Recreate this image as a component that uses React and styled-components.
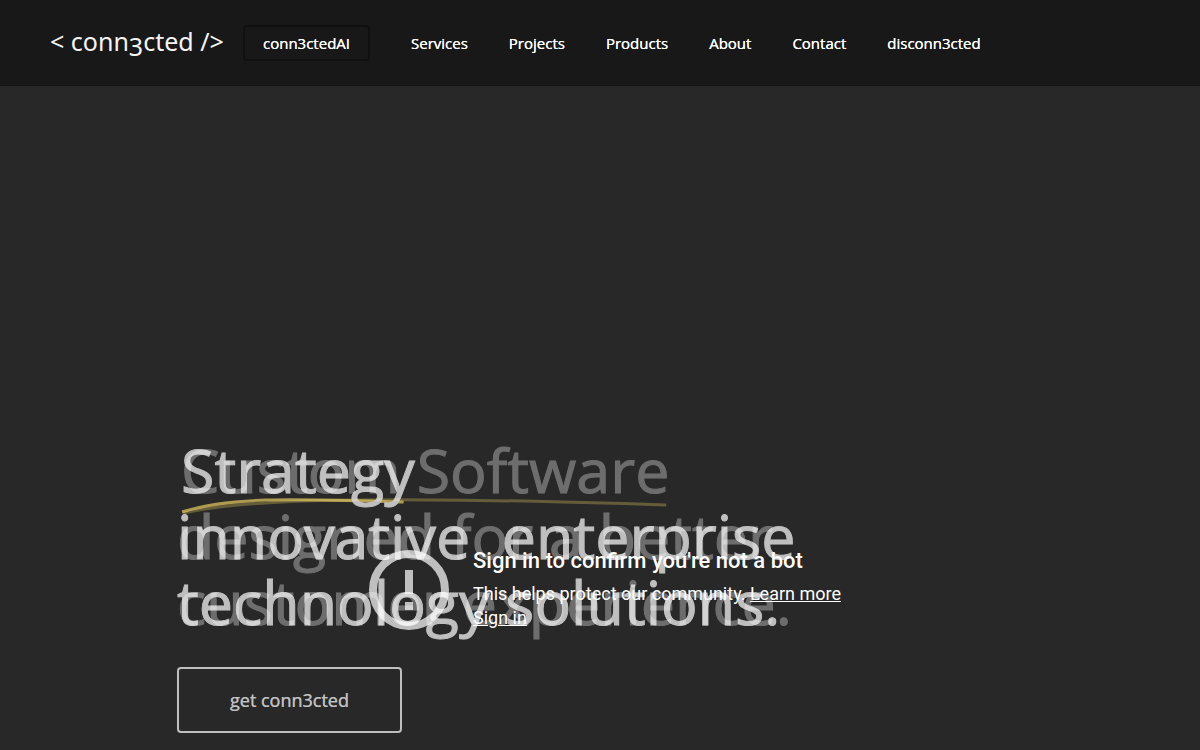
import styled, { createGlobalStyle } from "styled-components";

const GlobalStyle = createGlobalStyle`
  * {
    box-sizing: border-box;
  }

  body {
    margin: 0;
    background-color: #282828;
    color: #ffffff;
    font-family: "Open Sans", sans-serif;
  }
`;

const Header = styled.header`
  display: flex;
  align-items: center;
  height: 86px;
  padding: 0 50px;
  background-color: #181818;
  border-bottom: 1px solid #131313;
`;

const LogoLink = styled.a`
  display: flex;
  margin-right: 17px;
`;

const Nav = styled.nav`
  display: flex;
  align-items: center;
  gap: 41px;
`;

const NavLink = styled.a`
  color: #ffffff;
  font-size: 15px;
  line-height: 20px;
  text-decoration: none;
  text-shadow: 0 0 0 #ffffff;
  white-space: nowrap;
`;

const NavButton = styled(NavLink)`
  padding: 6px 18px;
  border: 2px solid #101010;
  border-radius: 4px;
`;

const Hero = styled.main`
  display: grid;
  align-items: end;
  min-height: calc(100vh - 86px);
`;

const VideoMessage = styled.section`
  grid-area: 1 / 1;
  justify-self: center;
  display: flex;
  gap: 24px;
  margin-bottom: 120px;
  padding-left: 10px;
  font-family: Roboto, sans-serif;
`;

const MessageTitle = styled.p`
  margin: 0 0 10px;
  font-size: 22px;
  font-weight: 500;
  line-height: 22px;
`;

const MessageText = styled.p`
  margin: 0;
  font-size: 18px;
  line-height: 24px;
`;

const MessageLink = styled.a`
  color: #ffffff;
  text-decoration: underline;
`;

const Content = styled.section`
  grid-area: 1 / 1;
  display: grid;
  justify-items: start;
  row-gap: 32px;
  padding: 0 177px 17px;
  z-index: 1;
`;

const Slides = styled.div`
  display: grid;
`;

const Slide = styled.h1`
  grid-area: 1 / 1;
  margin: 0;
  font-size: 61px;
  font-weight: 400;
  line-height: 66px;
  white-space: pre;
  -webkit-text-stroke: 1px #ffffff;
  opacity: ${(props) => props.$opacity};
`;

const Highlight = styled.span`
  position: relative;
  display: inline-block;
  padding: 0 4px;
`;

const Underline = styled.svg`
  position: absolute;
  left: 0;
  bottom: -13px;
  width: 100%;
  height: 18px;
  z-index: -1;
`;

const CtaButton = styled.button`
  width: 225px;
  height: 66px;
  border: 2px solid #ffffff;
  border-radius: 4px;
  background: transparent;
  color: #ffffff;
  font-family: inherit;
  font-size: 18px;
  text-shadow: 0 0 0 #ffffff;
  opacity: 0.7;
`;

const links = [
  "Services",
  "Projects",
  "Products",
  "About",
  "Contact",
  "disconn3cted",
];

const slides = [
  {
    title: "Custom Software",
    stroke: "M6 15C70 0 200 -2 473 7",
    lines: ["designed for a better", "customer experience."],
    opacity: 0.32,
  },
  {
    title: "Strategy",
    stroke: "M10 14C110 -2 240 1 450 4",
    lines: ["innovative  enterprise", "technology solutions."],
    opacity: 0.7,
  },
];

function Logo() {
  return (
    <svg width="176" height="42" viewBox="0 0 176 42" aria-label="conn3cted">
      <g fill="#f4f4f4" fontFamily="Noto Sans, sans-serif" fontSize="25">
        <text x="0" y="29">
          &lt; conn<tspan dy="5">3</tspan>
          <tspan dy="-5">cted /&gt;</tspan>
        </text>
      </g>
    </svg>
  );
}

function App() {
  return (
    <>
      <GlobalStyle />
      <Header>
        <LogoLink href="#">
          <Logo />
        </LogoLink>
        <Nav>
          <NavButton href="#ai">conn3ctedAI</NavButton>
          {links.map((link) => (
            <NavLink href={`#${link.toLowerCase()}`} key={link}>
              {link}
            </NavLink>
          ))}
        </Nav>
      </Header>
      <Hero>
        <VideoMessage>
          <svg width="80" height="80" viewBox="0 0 80 80">
            <circle
              cx="40"
              cy="40"
              r="36"
              fill="none"
              stroke="#bfbfbf"
              strokeWidth="8"
            />
            <path d="M36 20h8v24h-8zM36 52h8v8h-8z" fill="#bfbfbf" />
          </svg>
          <div>
            <MessageTitle>Sign in to confirm you're not a bot</MessageTitle>
            <MessageText>
              This helps protect our community.{" "}
              <MessageLink href="#learn">Learn more</MessageLink>
            </MessageText>
            <MessageText>
              <MessageLink href="#signin">Sign in</MessageLink>
            </MessageText>
          </div>
        </VideoMessage>
        <Content>
          <Slides>
            {slides.map((slide) => (
              <Slide $opacity={slide.opacity} key={slide.title}>
                <Highlight>
                  {slide.title}
                  <Underline viewBox="0 0 480 18" preserveAspectRatio="none">
                    <path
                      d={slide.stroke}
                      fill="none"
                      stroke="#e6cb62"
                      strokeWidth="3"
                      vectorEffect="non-scaling-stroke"
                    />
                  </Underline>
                </Highlight>
                {slide.lines.map((line) => (
                  <div key={line}>{line}</div>
                ))}
              </Slide>
            ))}
          </Slides>
          <CtaButton type="button">get conn3cted</CtaButton>
        </Content>
      </Hero>
    </>
  );
}

export default App;
